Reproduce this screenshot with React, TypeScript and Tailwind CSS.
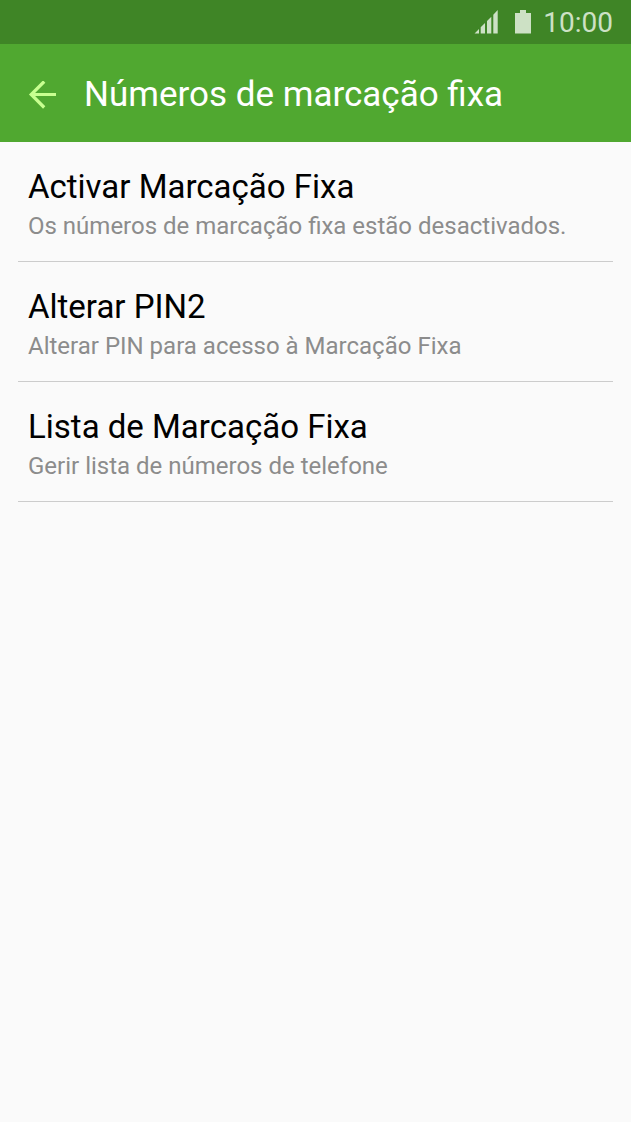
const items = [
  {
    title: "Activar Marcação Fixa",
    summary: "Os números de marcação fixa estão desactivados.",
  },
  {
    title: "Alterar PIN2",
    summary: "Alterar PIN para acesso à Marcação Fixa",
  },
  {
    title: "Lista de Marcação Fixa",
    summary: "Gerir lista de números de telefone",
  },
];

function StatusBar() {
  return (
    <div className="flex h-11 items-center justify-end bg-[#3f8526] pr-[18px] text-[#cde1c5]">
      <svg className="mr-[17px] h-6 w-6" viewBox="0 0 24 24" fill="currentColor" aria-hidden="true">
        <path d="M0.5 23.5L5 19v4.5zM6.7 17.3L11 13v10.5H6.7zM13 11l4.3-4.3v16.8H13zM19.3 4.7L23.7 0v23.5h-4.4z" />
      </svg>
      <svg className="mr-3 h-6 w-4" viewBox="0 0 16 24" fill="currentColor" aria-hidden="true">
        <path d="M5 0h6v3h5v20.5H0V3h5z" />
      </svg>
      <span className="pt-0.5 text-[28px] leading-8">10:00</span>
    </div>
  );
}

function Header() {
  return (
    <header className="flex h-[98px] items-center bg-[#50a830] px-7 pt-1">
      <button type="button" aria-label="Voltar" className="mr-7 text-[#c8ff90]">
        <svg className="h-7 w-7" viewBox="0 0 28 28" fill="none" stroke="currentColor" strokeWidth="3.2" aria-hidden="true">
          <path d="M28.5 13.5H3M16.2 .5L3.2 13.5l13 13" />
        </svg>
      </button>
      <h1 className="text-[35px] leading-10 text-white">Números de marcação fixa</h1>
    </header>
  );
}

function App() {
  return (
    <div className="min-h-screen bg-[#fafafa] font-[Roboto,sans-serif]">
      <StatusBar />
      <Header />
      <ul className="px-[18px]">
        {items.map((item) => (
          <li key={item.title} className="border-b border-[#cccccc]">
            <button type="button" className="block w-full px-[10px] pt-[25px] pb-4 text-left">
              <span className="block text-[33px] leading-10 text-black">{item.title}</span>
              <span className="block text-2xl leading-[38px] text-[#8c8c8c]">{item.summary}</span>
            </button>
          </li>
        ))}
      </ul>
    </div>
  );
}

export default App;
